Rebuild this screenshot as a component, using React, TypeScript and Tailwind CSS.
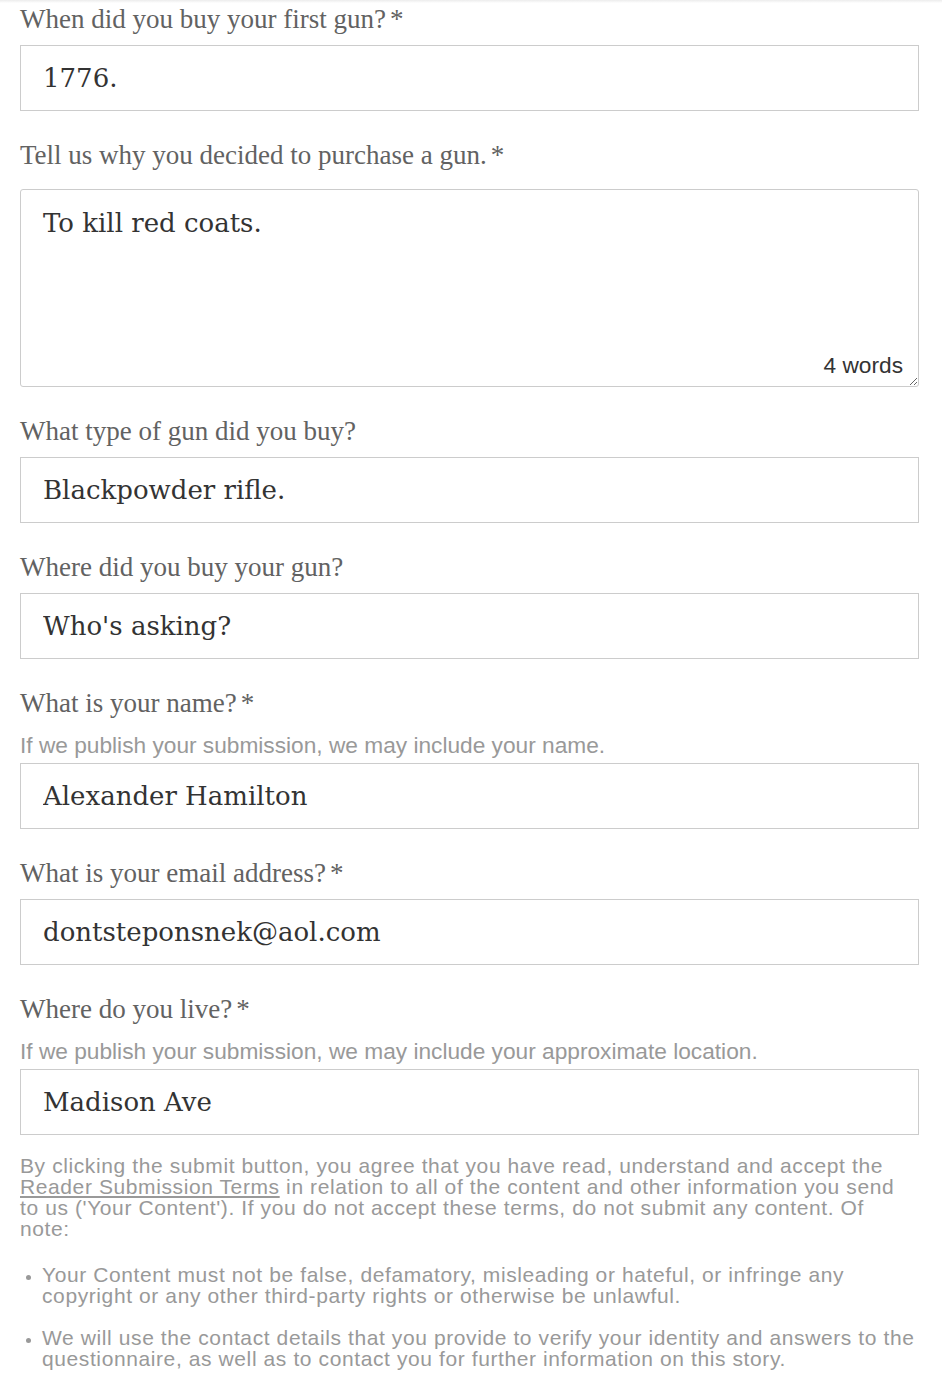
import type { ReactNode } from 'react';

const labelCls =
  "block text-[27px] leading-[32px] text-[#626262] font-['Liberation_Serif',serif]";
const hintCls =
  "mt-[14px] text-[22.7px] leading-[24px] text-[#999] font-['Liberation_Sans',sans-serif]";
const inputCls =
  "block w-full h-[66px] border border-[#ccc] bg-white px-[22px] text-[26px] text-[#333] font-['DejaVu_Serif',serif] outline-none";

function Label({ children, required }: { children: ReactNode; required?: boolean }) {
  return (
    <label className={labelCls}>
      {children}
      {required && <span className="ml-[4px]">*</span>}
    </label>
  );
}

function Field({
  label,
  value,
  hint,
  required,
}: {
  label: string;
  value: string;
  hint?: string;
  required?: boolean;
}) {
  return (
    <div className="mt-[28px]">
      <Label required={required}>{label}</Label>
      {hint && <p className={hintCls}>{hint}</p>}
      <input readOnly value={value} className={`${inputCls} ${hint ? 'mt-[6px]' : 'mt-[10px]'}`} />
    </div>
  );
}

export default function App() {
  return (
    <div className="min-h-screen bg-white pb-6">
      {/* faint shade left by the header above */}
      <div className="h-[3px] bg-gradient-to-b from-[#ececec] to-white" />
      <div className="pl-5 pr-[23px]">
        <div>
          <Label required>When did you buy your first gun?</Label>
          <input readOnly value="1776." className={`${inputCls} mt-[10px]`} />
        </div>

        <div className="mt-[28px]">
          <Label required>Tell us why you decided to purchase a gun.</Label>
          <div className="relative mt-[18px]">
            <textarea
              readOnly
              defaultValue="To kill red coats."
              className="block w-full h-[198px] resize-y rounded-[3px] border border-[#ccc] bg-white px-[22px] pt-[16px] text-[26px] leading-[34px] text-[#333] font-['DejaVu_Serif',serif] outline-none"
            />
            <span className="pointer-events-none absolute bottom-[10px] right-[16px] text-[22.7px] leading-[24px] text-[#333] font-['Liberation_Sans',sans-serif]">
              4 words
            </span>
          </div>
        </div>

        <Field label="What type of gun did you buy?" value="Blackpowder rifle." />
        <Field label="Where did you buy your gun?" value="Who's asking?" />
        <Field
          label="What is your name?"
          required
          hint="If we publish your submission, we may include your name."
          value="Alexander Hamilton"
        />
        <Field label="What is your email address?" required value="dontsteponsnek@aol.com" />
        <Field
          label="Where do you live?"
          required
          hint="If we publish your submission, we may include your approximate location."
          value="Madison Ave"
        />

        <div className="mt-[20px] text-[21px] leading-[21px] tracking-[0.6px] text-[#999] font-['Liberation_Sans',sans-serif]">
          <p>
            By clicking the submit button, you agree that you have read, understand and accept the{' '}
            <a className="underline underline-offset-2">Reader Submission Terms</a> in relation to
            all of the content and other information you send to us ('Your Content'). If you do not
            accept these terms, do not submit any content. Of note:
          </p>
          <ul className="mt-[25px] flex flex-col gap-[21px] pl-[22px] list-disc marker:text-[16px]">
            <li>
              Your Content must not be false, defamatory, misleading or hateful, or infringe any
              copyright or any other third-party rights or otherwise be unlawful.
            </li>
            <li>
              We will use the contact details that you provide to verify your identity and answers
              to the questionnaire, as well as to contact you for further information on this
              story.
            </li>
          </ul>
        </div>
      </div>
    </div>
  );
}
